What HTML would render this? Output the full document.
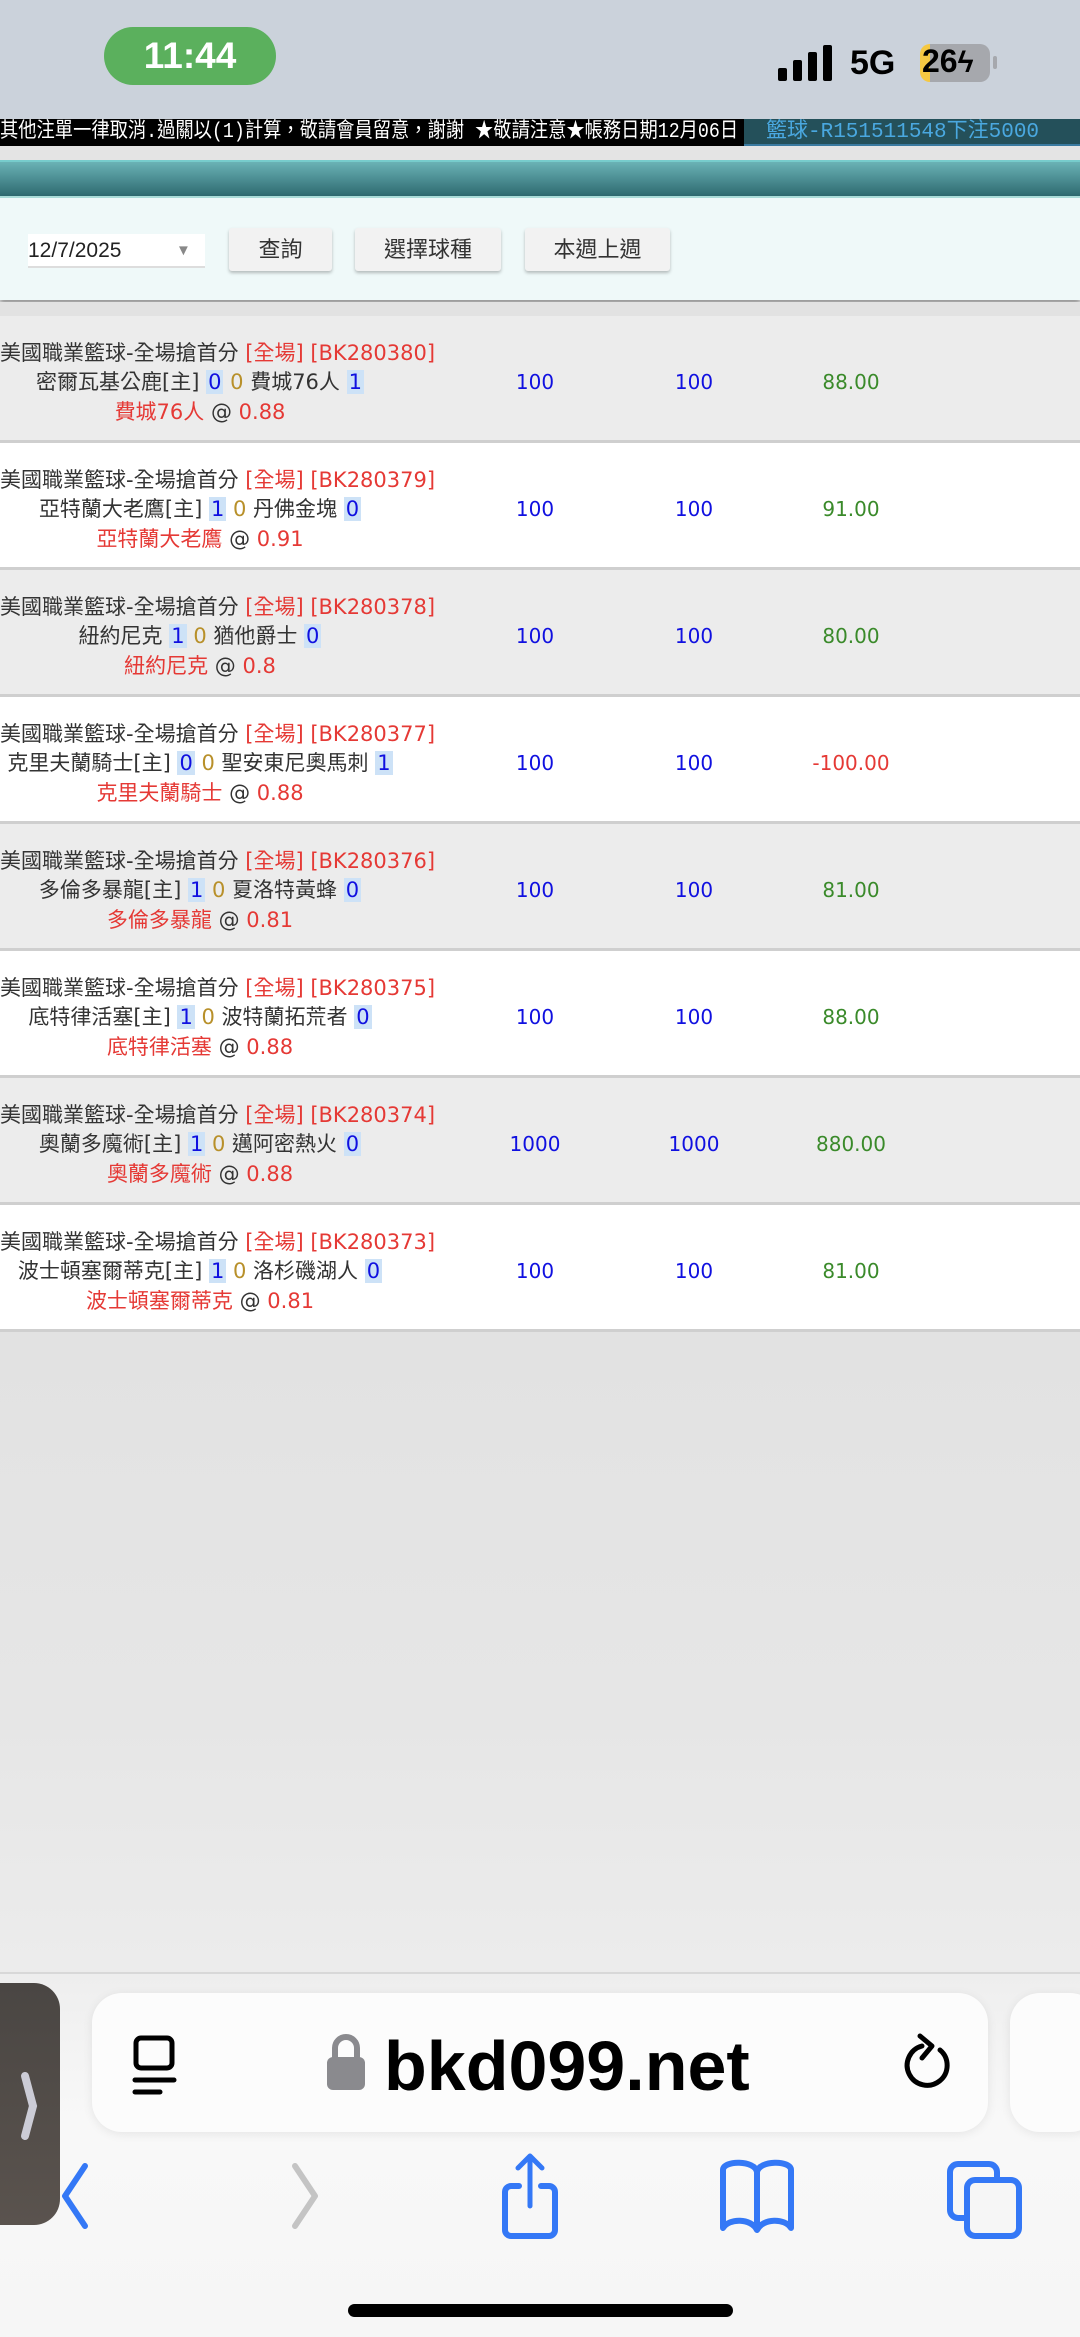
<!DOCTYPE html>
<html><head><meta charset="utf-8">
<style>
*{margin:0;padding:0;box-sizing:border-box}
body{width:1080px;height:2337px;position:relative;overflow:hidden;background:#e8e8e8;font-family:"Liberation Sans","Noto Sans CJK TC",sans-serif}
.abs{position:absolute}
.row{position:absolute;left:0;width:1080px;height:127px;border-bottom:3px solid #cfcfcf;font-family:"DejaVu Sans","Noto Sans CJK TC",sans-serif}
.l1{position:absolute;left:0;top:23px;font-size:21px;color:#333;white-space:nowrap;line-height:29px}
.l2{position:absolute;left:0;width:400px;text-align:center;top:52px;font-size:21px;color:#333;white-space:nowrap;line-height:29px}
.l3{position:absolute;left:0;width:400px;text-align:center;top:82px;font-size:21px;color:#333;white-space:nowrap;line-height:29px}
.r{color:#e53935}
.b{color:#1010e0;background:#cde2f7;padding:0 2px}
.g{color:#b8902a}
.n{position:absolute;top:52px;font-size:20px;line-height:29px;text-align:center;width:120px}
.c1{left:475px;color:#1010e0}.c2{left:634px;color:#1010e0}.c3{left:791px;color:#3a8a2a}
.btn{position:absolute;top:228px;height:43px;background:#f2f2f2;border-radius:3px;box-shadow:0 2px 3px rgba(0,0,0,.25);font-size:22px;color:#333;text-align:center;line-height:43px}
</style></head><body>
<div class="abs" style="left:0;top:0;width:1080px;height:119px;background:#cbd2db"></div>
<div class="abs" style="left:104px;top:27px;width:172px;height:58px;border-radius:29px;background:#5bb05d;color:#fff;font-size:37px;font-weight:bold;text-align:center;line-height:58px">11:44</div>
<div class="abs" style="left:778px;top:68px;width:9px;height:13px;background:#000;border-radius:2px"></div>
<div class="abs" style="left:793px;top:60px;width:9px;height:21px;background:#000;border-radius:2px"></div>
<div class="abs" style="left:808px;top:52px;width:9px;height:29px;background:#000;border-radius:2px"></div>
<div class="abs" style="left:823px;top:45px;width:9px;height:36px;background:#000;border-radius:2px"></div>
<div class="abs" style="left:850px;top:44px;font-size:34px;font-weight:bold;color:#000">5G</div>
<div class="abs" style="left:920px;top:44px;width:70px;height:38px;border-radius:10px;background:linear-gradient(90deg,#f5c842 0 14%,#a6a8ad 14%)"></div>
<div class="abs" style="left:922px;top:43px;font-size:32px;font-weight:bold;color:#000">26<span style="font-size:30px">ϟ</span></div>
<div class="abs" style="left:993px;top:56px;width:4px;height:13px;background:#a6a8ad;border-radius:2px"></div>
<div class="abs" style="left:0;top:119px;width:744px;height:27px;background:#000;color:#fff;font-family:'Liberation Mono','Noto Sans CJK TC',monospace;font-size:21px;line-height:27px;white-space:nowrap;overflow:hidden"><span style="display:inline-block;transform:scaleX(.87);transform-origin:0 50%">其他注單一律取消.過關以(1)計算，敬請會員留意，謝謝 ★敬請注意★帳務日期12月06日</span></div>
<div class="abs" style="left:744px;top:119px;width:336px;height:27px;background:#24505a;border-bottom:2px solid #3a7aa0;color:#4aa8e0;font-family:'Liberation Mono','Noto Sans CJK TC',monospace;font-size:21px;line-height:27px;padding-left:22px;white-space:nowrap">籃球-R151511548下注5000</div>
<div class="abs" style="left:0;top:146px;width:1080px;height:14px;background:#e4e4e4"></div>
<div class="abs" style="left:0;top:160px;width:1080px;height:36px;background:linear-gradient(#6ab2b5,#2e6a70);border-top:2px solid #7cc"></div>
<div class="abs" style="left:0;top:196px;width:1080px;height:104px;background:#eff9f9;border-top:2px solid #a9dcd8;box-shadow:0 4px 5px rgba(0,0,0,.35)"></div>
<div class="abs" style="left:28px;top:234px;width:177px;height:34px;background:#fff;border-bottom:2px solid #ddd;font-size:21px;line-height:34px;color:#222">12/7/2025<span style="position:absolute;left:148px;color:#888;font-size:15px">▼</span></div>
<div class="btn" style="left:229px;width:103px">查詢</div>
<div class="btn" style="left:355px;width:146px">選擇球種</div>
<div class="btn" style="left:525px;width:145px">本週上週</div>
<div class="abs" style="left:0;top:302px;width:1080px;height:14px;background:#e2e2e2"></div>

<div class="row" style="top:316px;background:#ececec"><div class="l1">美國職業籃球-全場搶首分 <span class="r">[全場] [BK280380]</span></div><div class="l2">密爾瓦基公鹿[主] <span class="b">0</span> <span class="g">0</span> 費城76人 <span class="b">1</span></div><div class="l3"><span class="r">費城76人</span> @ <span class="r">0.88</span></div><div class="n c1">100</div><div class="n c2">100</div><div class="n c3">88.00</div></div>
<div class="row" style="top:443px;background:#fff"><div class="l1">美國職業籃球-全場搶首分 <span class="r">[全場] [BK280379]</span></div><div class="l2">亞特蘭大老鷹[主] <span class="b">1</span> <span class="g">0</span> 丹佛金塊 <span class="b">0</span></div><div class="l3"><span class="r">亞特蘭大老鷹</span> @ <span class="r">0.91</span></div><div class="n c1">100</div><div class="n c2">100</div><div class="n c3">91.00</div></div>
<div class="row" style="top:570px;background:#ececec"><div class="l1">美國職業籃球-全場搶首分 <span class="r">[全場] [BK280378]</span></div><div class="l2">紐約尼克 <span class="b">1</span> <span class="g">0</span> 猶他爵士 <span class="b">0</span></div><div class="l3"><span class="r">紐約尼克</span> @ <span class="r">0.8</span></div><div class="n c1">100</div><div class="n c2">100</div><div class="n c3">80.00</div></div>
<div class="row" style="top:697px;background:#fff"><div class="l1">美國職業籃球-全場搶首分 <span class="r">[全場] [BK280377]</span></div><div class="l2">克里夫蘭騎士[主] <span class="b">0</span> <span class="g">0</span> 聖安東尼奧馬刺 <span class="b">1</span></div><div class="l3"><span class="r">克里夫蘭騎士</span> @ <span class="r">0.88</span></div><div class="n c1">100</div><div class="n c2">100</div><div class="n c3" style="color:#e53935">-100.00</div></div>
<div class="row" style="top:824px;background:#ececec"><div class="l1">美國職業籃球-全場搶首分 <span class="r">[全場] [BK280376]</span></div><div class="l2">多倫多暴龍[主] <span class="b">1</span> <span class="g">0</span> 夏洛特黃蜂 <span class="b">0</span></div><div class="l3"><span class="r">多倫多暴龍</span> @ <span class="r">0.81</span></div><div class="n c1">100</div><div class="n c2">100</div><div class="n c3">81.00</div></div>
<div class="row" style="top:951px;background:#fff"><div class="l1">美國職業籃球-全場搶首分 <span class="r">[全場] [BK280375]</span></div><div class="l2">底特律活塞[主] <span class="b">1</span> <span class="g">0</span> 波特蘭拓荒者 <span class="b">0</span></div><div class="l3"><span class="r">底特律活塞</span> @ <span class="r">0.88</span></div><div class="n c1">100</div><div class="n c2">100</div><div class="n c3">88.00</div></div>
<div class="row" style="top:1078px;background:#ececec"><div class="l1">美國職業籃球-全場搶首分 <span class="r">[全場] [BK280374]</span></div><div class="l2">奧蘭多魔術[主] <span class="b">1</span> <span class="g">0</span> 邁阿密熱火 <span class="b">0</span></div><div class="l3"><span class="r">奧蘭多魔術</span> @ <span class="r">0.88</span></div><div class="n c1">1000</div><div class="n c2">1000</div><div class="n c3">880.00</div></div>
<div class="row" style="top:1205px;background:#fff"><div class="l1">美國職業籃球-全場搶首分 <span class="r">[全場] [BK280373]</span></div><div class="l2">波士頓塞爾蒂克[主] <span class="b">1</span> <span class="g">0</span> 洛杉磯湖人 <span class="b">0</span></div><div class="l3"><span class="r">波士頓塞爾蒂克</span> @ <span class="r">0.81</span></div><div class="n c1">100</div><div class="n c2">100</div><div class="n c3">81.00</div></div>
<div class="abs" style="left:0;top:1332px;width:1080px;height:640px;background:linear-gradient(#e2e2e2,#e6e6e6 60%,#ececec)"></div>

<div class="abs" style="left:0;top:1972px;width:1080px;height:365px;background:linear-gradient(#eeeeee,#f8f8f8 40%,#f6f6f6);border-top:2px solid #d8d8d8"></div>
<div class="abs" style="left:92px;top:1993px;width:896px;height:139px;border-radius:30px;background:#fcfcfc;box-shadow:0 2px 10px rgba(0,0,0,.08)"></div>
<div class="abs" style="left:1010px;top:1993px;width:90px;height:139px;border-radius:30px;background:#fcfcfc;box-shadow:0 2px 10px rgba(0,0,0,.08)"></div>
<div class="abs" style="left:0;top:1983px;width:60px;height:242px;border-radius:0 26px 26px 0;background:linear-gradient(#4a4643,#5a534e)"></div>
<svg class="abs" style="left:14px;top:2068px" width="30" height="76"><path d="M11 8 L19 38 L11 68" stroke="#ccccd6" stroke-width="8" fill="none" stroke-linecap="round"/></svg>
<svg class="abs" style="left:126px;top:2030px" width="56" height="66"><rect x="10" y="8" width="36" height="30" rx="5" stroke="#000" stroke-width="5" fill="none"/><line x1="9" y1="50" x2="48" y2="50" stroke="#000" stroke-width="5" stroke-linecap="round"/><line x1="9" y1="62" x2="34" y2="62" stroke="#000" stroke-width="5" stroke-linecap="round"/></svg>
<svg class="abs" style="left:325px;top:2032px" width="42" height="60"><path d="M10 26 V16 a11 11 0 0 1 22 0 V26" stroke="#8a8a8e" stroke-width="6" fill="none"/><rect x="2" y="25" width="38" height="33" rx="6" fill="#8a8a8e"/></svg>
<div class="abs" style="left:384px;top:2026px;font-size:70px;font-weight:bold;color:#000;letter-spacing:0px;line-height:80px">bkd099.net</div>
<svg class="abs" style="left:900px;top:2028px" width="60" height="68"><path d="M40 22 A20 20 0 1 1 22 18" stroke="#000" stroke-width="5" fill="none" stroke-linecap="round"/><path d="M20 8 L32 18 L22 30" stroke="#000" stroke-width="5" fill="none" stroke-linecap="round" stroke-linejoin="round"/></svg>
<svg class="abs" style="left:55px;top:2160px" width="40" height="72"><path d="M30 6 L10 36 L30 66" stroke="#3478f6" stroke-width="6" fill="none" stroke-linecap="round" stroke-linejoin="round"/></svg>
<svg class="abs" style="left:285px;top:2160px" width="40" height="72"><path d="M10 6 L30 36 L10 66" stroke="#c4c4c4" stroke-width="6" fill="none" stroke-linecap="round" stroke-linejoin="round"/></svg>
<svg class="abs" style="left:495px;top:2150px" width="70" height="90"><path d="M24 36 H16 a6 6 0 0 0 -6 6 V80 a6 6 0 0 0 6 6 H54 a6 6 0 0 0 6 -6 V42 a6 6 0 0 0 -6 -6 H46" stroke="#3478f6" stroke-width="6" fill="none" stroke-linecap="round"/><path d="M35 56 V6 M23 18 L35 6 L47 18" stroke="#3478f6" stroke-width="5" fill="none" stroke-linecap="round" stroke-linejoin="round"/></svg>
<svg class="abs" style="left:715px;top:2158px" width="85" height="80"><path d="M8 12 C8 2 40 2 42 14 C44 2 76 2 76 12 V70 C70 60 48 60 42 72 C36 60 14 60 8 70 Z M42 14 V70" stroke="#3478f6" stroke-width="6" fill="none" stroke-linejoin="round"/></svg>
<svg class="abs" style="left:945px;top:2160px" width="80" height="80"><rect x="5" y="4" width="47" height="54" rx="8" stroke="#3478f6" stroke-width="6" fill="none"/><rect x="22" y="20" width="52" height="56" rx="8" stroke="#3478f6" stroke-width="6" fill="#f6f6f6"/></svg>
<div class="abs" style="left:348px;top:2304px;width:385px;height:13px;border-radius:7px;background:#000"></div>
</body></html>
